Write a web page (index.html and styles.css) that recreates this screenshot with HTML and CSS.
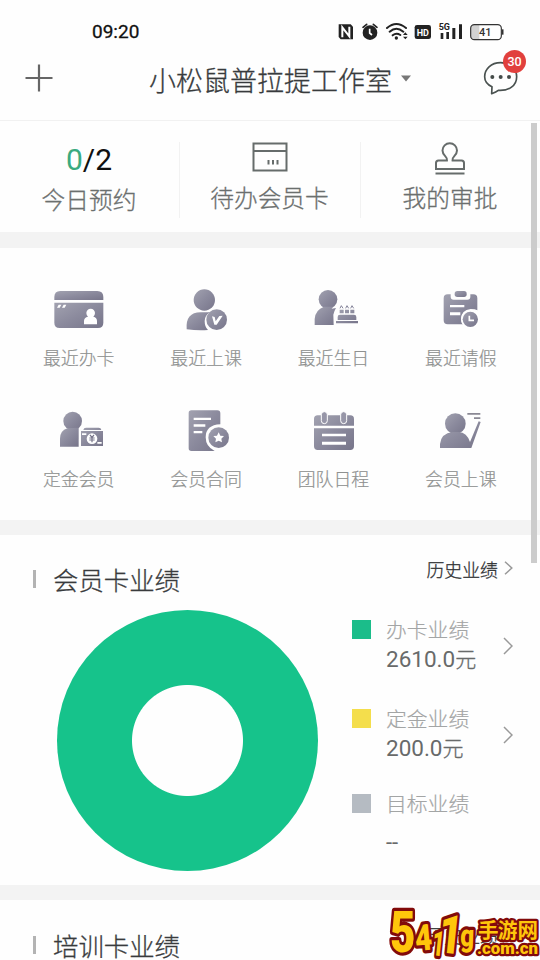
FILE: index.html
```html
<!DOCTYPE html>
<html lang="zh-CN">
<head>
<meta charset="utf-8">
<title>小松鼠普拉提工作室</title>
<link rel="stylesheet" href="styles.css">
</head>
<body>
<svg class="defs" width="0" height="0" aria-hidden="true">
  <defs>
    <linearGradient id="g" x1="0" y1="0" x2="1" y2="1">
      <stop offset="0" stop-color="#a2a2b0"/><stop offset=".5" stop-color="#8b8a9d"/><stop offset="1" stop-color="#77758a"/>
    </linearGradient>
  </defs>
</svg>
<div class="screen">
  <div class="status">
    <span class="time">09:20</span>
    <svg class="status-icons" viewBox="201 60 510 72">
      <g fill="#222">
        <path d="M206 73h36l7 7v38h-37l-6-7z"/>
        <path d="M217 112V82l21 27V80" fill="none" stroke="#fff" stroke-width="6"/>
        <circle cx="300" cy="98" r="22"/>
        <path d="M279 82l11-9M321 82l-11-9" stroke="#222" stroke-width="5" stroke-linecap="round"/>
        <path d="M299 86v13l7 6" fill="none" stroke="#fff" stroke-width="5"/>
        <g fill="none" stroke="#222" stroke-width="6" stroke-linecap="round">
          <path d="M351 84q28-24 57 0M359 95q20-17 41 0M368 106q11-9 23-1"/>
        </g>
        <circle cx="379" cy="114" r="5"/>
        <path d="M399 105l7-8 7 8zM399 110l7 8 7-8z"/>
        <rect x="434" y="75" width="49" height="42" rx="7"/>
        <path d="M512 99h8v18h-8zM529 96h8v21h-8zM547 84h9v33h-9zM567 73h9v44h-9z"/>
      </g>
      <text x="458.500" y="107" class="hd" text-anchor="middle">HD</text>
      <text x="506" y="91" class="fiveg">5G</text>
      <path d="M610 75h18v43h-18q-8 0-8-8V83q0-8 8-8z" fill="#d2d2d2"/>
      <rect x="602" y="74" width="92" height="45" rx="11" fill="none" stroke="#333" stroke-width="3.500"/>
      <path d="M698 88v16" stroke="#333" stroke-width="5"/>
      <text x="646" y="108" class="batt" text-anchor="middle">41</text>
    </svg>
  </div>
  <header class="header">
    <svg class="plus" viewBox="0 0 28 28"><path d="M14 .5v27M.5 14h27" stroke="#666" stroke-width="2.200"/></svg>
    <h1 class="title">小松鼠普拉提工作室</h1>
    <svg class="caret" viewBox="0 0 10 7"><path d="M0 .5h10L5 6.500z" fill="#777"/></svg>
    <div class="chat">
      <svg viewBox="640 180 108 108" width="36" height="36">
        <path d="M666 281l1-21Q645 250 645 230C645 207 664 188 693 188C722 188 741 207 741 230C741 257 718 273 686 271Q680 276 666 281z" fill="none" stroke="#4a5250" stroke-width="5" stroke-linejoin="round"/>
        <g fill="#444b49"><circle cx="668" cy="231" r="6"/><circle cx="693" cy="231" r="6"/><circle cx="718" cy="231" r="6"/></g>
      </svg>
      <span class="badge">30</span>
    </div>
  </header>

  <section class="stats">
    <div class="stat first"><div class="count"><b>0</b>/2</div><div class="stat-label">今日预约</div></div>
    <div class="stat">
      <svg viewBox="0 0 36 30" width="36" height="30" fill="none" stroke="#666c6b" stroke-width="2"><path d="M1.500 1.500h33v27h-33zM1.500 9h33M16.500 18v4.500M21 18v4.500M25.500 18v4.500"/></svg>
      <div class="stat-label">待办会员卡</div>
    </div>
    <div class="stat">
      <svg viewBox="0 0 32 33" width="32" height="33" fill="none" stroke="#666c6b" stroke-width="2"><path d="M13 18.500c1-4-4.500-4.500-4.500-10a7.200 7.200 0 0 1 14.500 0c0 5.500-5.500 6-4.500 10h9q2.500 0 2.500 2.500v6H2v-6q0-2.500 2.500-2.500zM1.500 31.500h29"/></svg>
      <div class="stat-label">我的审批</div>
    </div>
  </section>

  <section class="menu">
    <div class="item">
      <svg viewBox="57 45 180 150" fill="url(#g)">
        <path d="M73 90v-9q0-18 18-18h111q18 0 18 18v9z"/><path d="M73 98h147v60q0 16-16 16H89q-16 0-16-16z"/>
        <path d="M86 104h8l-5 9h-8zM101 104h8l-5 9h-8zM162 163v-10q0-11 12-13-5-5-5-11a13 13 0 0 1 26 0q0 6-5 11 11 2 11 13v10z" fill="#fff"/>
      </svg><span>最近办卡</span>
    </div>
    <div class="item">
      <svg viewBox="438 45 180 150" fill="url(#g)">
        <circle cx="523" cy="90" r="32"/><path d="M470 178q-4-51 42-51h28q-16 10-16 26 0 18 10 27-32 2-64-2z"/><circle cx="560" cy="149" r="31"/>
        <path d="M546 139l8 2 3 13 11-16 10-1-18 27h-7z" fill="#fff"/>
      </svg><span>最近上课</span>
    </div>
    <div class="item">
      <svg viewBox="69 45 180 150" fill="url(#g)">
        <circle cx="144" cy="88" r="28"/><path d="M104 165v-18q2-28 28-37h27l-4 6 13-2q-6 10-8 20l1 31z"/>
        <path d="M180 134h42q7 0 7 7v9h-56v-9q0-7 7-7zM168 153h66v7h-66zM179 119h12v11h-12zM195 119h12v11h-12zM211 119h12v11h-12z"/>
        <path d="M180 115l4-8 5 8M197 115l4-8 5 8M212 115l4-8 5 8" fill="none" stroke="#85849a" stroke-width="3"/>
      </svg><span>最近生日</span>
    </div>
    <div class="item">
      <svg viewBox="453 45 180 150" fill="url(#g)">
        <path d="M504 73h8v7q0 9 9 9h41q9 0 9-9v-7h9q12 0 12 12v36q-6-4-20-4-28 3-29 30 0 10 6 16h-46q-12 0-12-12V85q0-12 12-12z"/><rect x="524" y="63" width="36" height="18" rx="8"/>
        <path d="M510 105h43v7h-43zM510 127h31v9h-31z" fill="#fff"/><circle cx="571" cy="148" r="28" fill="#fff"/><circle cx="571" cy="148" r="23"/>
        <path d="M568 137v14h14" fill="none" stroke="#fff" stroke-width="5"/>
      </svg><span>最近请假</span>
    </div>
    <div class="item">
      <svg viewBox="57 45 180 150" fill="url(#g)">
        <circle cx="128" cy="90" r="28"/><path d="M90 167v-24q0-24 22-31l34-2v57z"/><path d="M160 117q1-7 8-7h38q7 0 8 7zM153 120h66v45h-66z"/>
        <path d="M156 127h13v5h-13zM202 153h13v5h-13z" fill="#fff"/><circle cx="186" cy="143" r="16" fill="#fff"/>
        <path d="M180 132l6 7 6-7M178 141h16M178 147h16M186 139v15" stroke="#77758a" stroke-width="3.500" fill="none"/>
      </svg><span>定金会员</span>
    </div>
    <div class="item">
      <svg viewBox="438 45 180 150" fill="url(#g)">
        <path d="M484 58h78q9 0 9 9v33q-44 2-44 39 0 28 27 41h-70q-8 0-8-8V66q0-8 8-8z"/>
        <path d="M491 80h52v7h-52zM491 100h35v7h-35zM491 120h26v7h-26z" fill="#fff"/><circle cx="566" cy="140" r="31"/>
        <path d="M566 124l5 10 11 1-8 8 2 11-10-5-10 5 2-11-8-8 11-1z" fill="#fff"/>
      </svg><span>会员合同</span>
    </div>
    <div class="item">
      <svg viewBox="69 45 180 150" fill="url(#g)">
        <path d="M113 73h98q11 0 11 11v20H102V84q0-11 11-11zM102 112h120v54q0 11-11 11h-98q-11 0-11-11z"/>
        <path d="M126 128h72v8h-72zM126 152h72v9h-72z" fill="#fff"/>
        <g stroke="#fff" stroke-width="3" fill="#9796a8"><rect x="124" y="62" width="18" height="36" rx="9"/><rect x="182" y="62" width="18" height="36" rx="9"/></g>
      </svg><span>团队日程</span>
    </div>
    <div class="item">
      <svg viewBox="453 45 180 150" fill="url(#g)">
        <circle cx="526" cy="98" r="31"/><path d="M480 171v-12q3-32 38-36h18q25 2 34 30l26-62 6 2-28 78z"/>
        <path d="M562 66h39v5h-39zM582 79h19v5h-19z" fill="#8b8994"/>
      </svg><span>会员上课</span>
    </div>
  </section>

  <section class="perf">
    <div class="perf-left">
      <h2>会员卡业绩</h2>
      <div class="donut"></div>
    </div>
    <div class="perf-right">
      <div class="history">历史业绩<svg class="chev small" viewBox="0 0 9 14"><path d="M1 .8l6.800 6.200L1 13.200"/></svg></div>
      <div class="legend">
        <i class="green"></i><div class="legend-text"><div class="name">办卡业绩</div><div class="amount">2610.0<em>元</em></div></div>
        <svg class="chev" viewBox="0 0 10 18"><path d="M1 1l8 8-8 8"/></svg>
      </div>
      <div class="legend">
        <i class="yellow"></i><div class="legend-text"><div class="name">定金业绩</div><div class="amount">200.0<em>元</em></div></div>
        <svg class="chev" viewBox="0 0 10 18"><path d="M1 1l8 8-8 8"/></svg>
      </div>
      <div class="legend last">
        <i class="gray"></i><div class="legend-text"><div class="name">目标业绩</div><div class="amount dash">--</div></div>
      </div>
    </div>
  </section>

  <section class="training">
    <h2>培训卡业绩</h2>
    <div class="history">历史业绩<svg class="chev small" viewBox="0 0 9 14"><path d="M1 .8l6.800 6.200L1 13.200"/></svg></div>
  </section>

  <div class="scrollbar"></div>
  <svg class="watermark" viewBox="370 880 170 80">
    <g class="wm">
      <text transform="translate(390 952) scale(.76 1)" font-size="58">5</text>
      <text transform="translate(416 951) rotate(-5) scale(.82 1)" font-size="36">4</text>
      <text transform="translate(431 955) rotate(6) scale(.6 1)" font-size="35">1</text>
      <text transform="translate(437 952) rotate(6) scale(.75 1)" font-size="54">1</text>
      <text transform="translate(460 946) rotate(2) scale(.78 1)" font-size="31">g</text>
    </g>
    <g class="wm small">
      <text class="cn" x="478" y="937.500" font-size="20.500" textLength="60">手游网</text>
      <text x="477" y="954" font-size="17" textLength="61" lengthAdjust="spacingAndGlyphs">.com.cn</text>
    </g>
  </svg>
</div>
</body>
</html>
```
FILE: styles.css
```css
* { box-sizing: border-box; }
body { margin: 0; background: #fff; font-family: "Noto Sans CJK SC", sans-serif; font-weight: 300; }
.defs { position: absolute; }
.screen { position: relative; width: 540px; height: 960px; overflow: hidden; background: #fefefe; -webkit-text-stroke: .3px currentColor; }
h1, h2 { margin: 0; font-weight: 300; }
svg { display: block; flex: none; -webkit-text-stroke: 0; }

.status { display: flex; height: 52px; padding: 20px 33px 0 92px; justify-content: space-between; }
.time { font: 400 19px/24px Roboto, sans-serif; color: #111; }
.status-icons { width: 170px; height: 24px; }
.hd { font: 700 27px Roboto, sans-serif; fill: #fff; }
.fiveg { font: 700 27px Roboto, sans-serif; fill: #222; stroke: #fff; stroke-width: 3px; paint-order: stroke; }
.batt { font: 500 33px Roboto, sans-serif; fill: #333; }

.header { display: flex; height: 69px; padding: 0 21px 17px 25px; align-items: center; border-bottom: 1px solid #f1f1f1; }
.plus { width: 28px; height: 28px; }
.title { margin: 4px 0 0 96px; font-size: 27px; line-height: 40px; color: #383b3d; white-space: nowrap; }
.caret { width: 10px; height: 7px; margin: 2px 0 0 9px; }
.chat { position: relative; margin-left: auto; width: 36px; height: 36px; }
.badge { position: absolute; right: -7px; top: -10px; width: 23px; height: 23px; border-radius: 50%; background: #e1403d; color: #fff; font: 500 12.500px/23px Roboto, sans-serif; text-align: center; -webkit-text-stroke: 0; }

.stats { display: grid; grid-template-columns: 179px 181px 180px; height: 111px; padding-top: 21px; }
.stat { display: flex; flex-direction: column; align-items: center; height: 76px; border-left: 1px solid #f2f2f2; justify-content: space-between; }
.stat:nth-child(2) { padding-right: 1px; }
.stat:nth-child(3) { padding-right: 1px; }
.stat.first { border: 0; padding-right: 1px; height: 78px; }
.count { font: 400 30px/34px Roboto, sans-serif; color: #111; -webkit-text-stroke: 0; margin-top: 1px; }
.count b { font-weight: 400; color: #3aaa80; }
.stat-label { font-size: 23.700px; line-height: 36px; color: #6b6f6e; margin-bottom: 3px; }

.menu { display: grid; grid-template-columns: repeat(4, 127.400px); grid-template-rows: 121px 121px; height: 303px; padding: 37px 0 0 15px; border-top: 16px solid #f3f3f3; border-bottom: 15px solid #f3f3f3; }
.item { display: flex; flex-direction: column; align-items: center; font-size: 17.900px; line-height: 26px; color: #8f9190; -webkit-text-stroke: .2px currentColor; }
.item svg { width: 60px; height: 50px; margin-bottom: 9px; }

.perf { display: flex; height: 350px; }
.perf-left { width: 351px; padding: 25px 0 0 33px; }
h2 { display: flex; align-items: center; height: 38px; gap: 17px; font-size: 25.400px; line-height: 38px; color: #393b3d; }
h2::before { content: ""; width: 3px; height: 18px; background: #b3b3b3; }
.donut { width: 261px; height: 261px; margin: 12px 0 0 24px; border-radius: 50%; background: radial-gradient(circle, #fefefe 55px, #16c38b 56px); }
.perf-right { width: 162px; padding-top: 21px; }
.history { display: flex; justify-content: flex-end; align-items: center; gap: 6px; height: 26px; font-size: 17.900px; line-height: 26px; color: #303234; }
.chev { width: 10px; height: 18px; fill: none; stroke: #999; stroke-width: 1.500; margin: 24px 0 0 auto; }
.chev.small { width: 9px; height: 14px; margin: 0 0 2px; }
.legend { display: flex; height: 89px; align-items: flex-start; }
.legend:nth-child(2) { margin-top: 31px; }
.legend:nth-child(4) { margin-top: -4px; }
.legend i { width: 19px; height: 19px; margin: 7px 15px 0 1px; }
.green { background: #1bbd8a; }
.yellow { background: #f4de4c; }
.gray { background: #b5bbc2; }
.legend-text { width: 92px; padding-top: 1px; }
.name { font-size: 20.800px; line-height: 30px; color: #a3a5a5; -webkit-text-stroke: .2px currentColor; }
.amount { font: 400 22.500px/30px Roboto, "Noto Sans CJK SC", sans-serif; color: #686a6a; white-space: nowrap; -webkit-text-stroke: 0; }
.amount em { font-style: normal; font-weight: 300; font-size: 21px; -webkit-text-stroke: .3px currentColor; }
.amount.dash { margin-top: 10px; font-size: 22px; }

.training { display: flex; justify-content: space-between; align-items: flex-start; height: 75px; padding: 26px 27px 0 33px; border-top: 15px solid #f3f3f3; }
.training .history { margin-top: -4px; }
.scrollbar { position: absolute; left: 531px; top: 123px; width: 6px; height: 440px; background: #ccc; }
.watermark { position: absolute; left: 370px; top: 880px; width: 170px; height: 80px; }
.wm { font-family: Roboto, sans-serif; font-weight: 900; fill: #ffc60b; stroke: #820b0b; stroke-width: 6.500px; stroke-linejoin: round; paint-order: stroke; }
.wm.small { stroke-width: 4.500px; }
.wm .cn { font-family: "Noto Sans CJK SC", sans-serif; font-weight: 700; }
```
